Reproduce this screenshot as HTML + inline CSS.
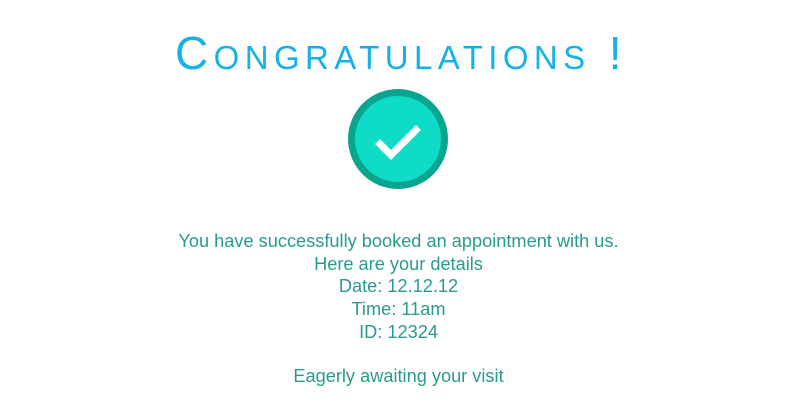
<!DOCTYPE html>
<html><head><style>
html,body{margin:0;padding:0;background:#fff;width:797px;height:409px;overflow:hidden}
h1{position:absolute;left:0;width:802px;top:27px;margin:0;text-align:center;font:400 46px/52px "Liberation Sans",sans-serif;color:#16b2e4;letter-spacing:5.4px}
h1 span{font-size:33px}
.c{position:absolute;left:348px;top:89px;width:100px;height:100px;border-radius:50%;background:#0aa58f}
.c i{position:absolute;left:7px;top:7px;width:86px;height:86px;border-radius:50%;background:#0fdcc7}
.t{position:absolute;left:0;width:797px;top:230px;text-align:center;font:400 18.2px/22.7px "Liberation Sans",sans-serif;color:#2a9a8e}
</style></head><body>
<h1>C<span>ONGRATULATIONS</span> !</h1>
<div class="c"><i></i><svg style="position:absolute;left:0;top:0" width="100" height="100"><path d="M32 55 L43 66 L68 41" fill="none" stroke="#fff" stroke-width="7" stroke-linecap="square"/></svg></div>
<div class="t">You have successfully booked an appointment with us.<br>Here are your details<br>Date: 12.12.12<br>Time: 11am<br>ID: 12324<br><div style="height:21px"></div>Eagerly awaiting your visit</div>
</body></html>
